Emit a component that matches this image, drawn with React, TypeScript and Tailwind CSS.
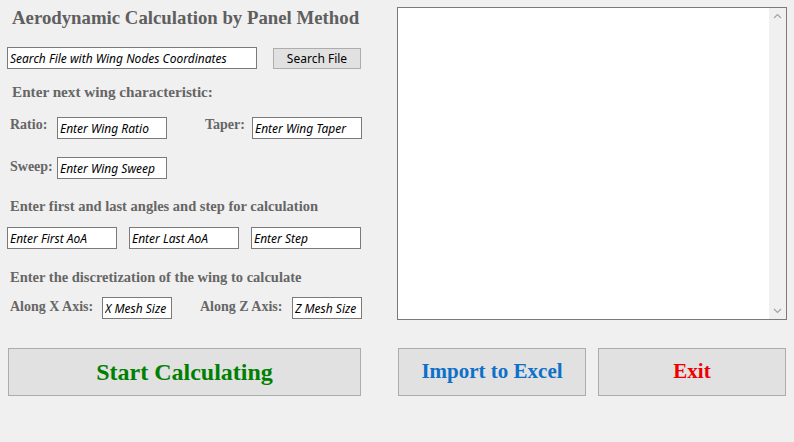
import { useState } from "react";

const serif = "font-['Liberation_Serif','Times_New_Roman',serif]";
const inputCls =
  "shrink-0 h-[22px] bg-white border border-[#7a7a7a] px-[2px] text-[12px] italic text-black outline-none font-['Noto_Sans',sans-serif]";
const labelCls = `${serif} shrink-0 font-bold text-[14px] leading-[16px] text-[#666666]`;
const headCls = `${serif} font-bold text-[14.5px] leading-[16px] text-[#666666]`;

function Field({ value, width }: { value: string; width: string }) {
  const [v, setV] = useState(value);
  return <input value={v} onChange={(e) => setV(e.target.value)} className={`${inputCls} ${width}`} />;
}

export default function App() {
  const [log] = useState("");

  return (
    <div className="w-[794px] h-[442px] bg-[#f0f0f0] overflow-hidden flex flex-col">
      <div className="flex">
        {/* left side: inputs */}
        <div className="w-[361px] shrink-0 pl-[7px] flex flex-col">
          <h1 className={`${serif} mt-[8px] ml-[5px] h-[20px] leading-[20px] text-[18.8px] font-bold text-[#5f5f5f] whitespace-nowrap`}>
            Aerodynamic Calculation by Panel Method
          </h1>

          <div className="mt-[19px] flex items-start">
            <Field value="Search File with Wing Nodes Coordinates" width="w-[250px]" />
            <button className="shrink-0 ml-[16px] mt-[1px] w-[88px] h-[21px] bg-[#e1e1e1] border border-[#adadad] text-[12px] text-black font-['Noto_Sans',sans-serif] leading-none">
              Search File
            </button>
          </div>

          <div className={`${serif} mt-[14px] ml-[5px] h-[18px] leading-[18px] text-[15.2px] font-bold text-[#666666]`}>
            Enter next wing characteristic:
          </div>

          <div className="mt-[16px] flex items-start">
            <span className={`${labelCls} ml-[3px] w-[47px]`}>Ratio:</span>
            <Field value="Enter Wing Ratio" width="w-[110px]" />
            <span className={`${labelCls} ml-[38px] w-[47px]`}>Taper:</span>
            <Field value="Enter Wing Taper" width="w-[110px]" />
          </div>

          <div className="mt-[18px] flex items-start">
            <span className={`${labelCls} ml-[3px] mt-[2px] w-[47px]`}>Sweep:</span>
            <Field value="Enter Wing Sweep" width="w-[110px]" />
          </div>

          <div className={`${headCls} mt-[19px] ml-[3px] whitespace-nowrap`}>
            Enter first and last angles and step for calculation
          </div>

          <div className="mt-[13px] flex gap-[12px]">
            <Field value="Enter First AoA" width="w-[110px]" />
            <Field value="Enter Last AoA" width="w-[110px]" />
            <Field value="Enter Step" width="w-[110px]" />
          </div>

          <div className={`${headCls} mt-[20px] ml-[3px] whitespace-nowrap`}>
            Enter the discretization of the wing to calculate
          </div>

          <div className="mt-[12px] flex items-start">
            <span className={`${labelCls} ml-[3px] mt-[2px] w-[92px] whitespace-nowrap`}>Along X Axis:</span>
            <Field value="X Mesh Size" width="w-[70px]" />
            <span className={`${labelCls} ml-[28px] mt-[2px] w-[92px] whitespace-nowrap`}>Along Z Axis:</span>
            <Field value="Z Mesh Size" width="w-[70px]" />
          </div>
        </div>

        {/* results box */}
        <div className="shrink-0 ml-[36px] mt-[7px] w-[390px] h-[313px] bg-white border border-[#7a7a7a] flex">
          <div className="flex-1 text-[12px] font-['Noto_Sans',sans-serif] whitespace-pre">{log}</div>
          <div className="w-[17px] bg-[#f0f0f0] flex flex-col justify-between items-center py-[5px]">
            <svg width="9" height="6" viewBox="0 0 9 6" fill="none" stroke="#a3a3a3" strokeWidth="1.2">
              <path d="M1 5 L4.5 1.5 L8 5" />
            </svg>
            <svg width="9" height="6" viewBox="0 0 9 6" fill="none" stroke="#a3a3a3" strokeWidth="1.2">
              <path d="M1 1 L4.5 4.5 L8 1" />
            </svg>
          </div>
        </div>
      </div>

      {/* bottom buttons */}
      <div className="mt-[28px] flex">
        <button className={`${serif} ml-[8px] w-[353px] h-[48px] bg-[#e1e1e1] border border-[#adadad] text-[24px] font-bold text-[#008000]`}>
          Start Calculating
        </button>
        <button className={`${serif} ml-[37px] w-[188px] h-[48px] bg-[#e1e1e1] border border-[#adadad] text-[21px] font-bold text-[#0f70c8]`}>
          Import to Excel
        </button>
        <button className={`${serif} ml-[12px] w-[188px] h-[48px] bg-[#e1e1e1] border border-[#adadad] text-[21px] font-bold text-[#ee0000]`}>
          Exit
        </button>
      </div>
    </div>
  );
}
